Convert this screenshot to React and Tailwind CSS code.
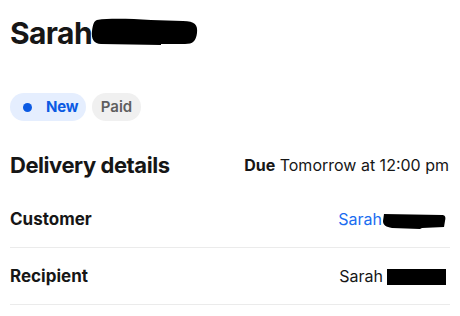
import React from "react";

export default function App() {
  return (
    <div className="w-[460px] h-[316px] bg-white overflow-hidden px-[10px] text-[#161616]" style={{ fontFamily: "Inter, 'Noto Sans', sans-serif" }}>
      <div className="pt-[15px] flex items-center">
        <h1 className="text-[30px] leading-[36px] font-bold tracking-[-0.6px]">Sarah</h1>
        <svg width="108" height="30" viewBox="0 0 108 30" className="ml-[-1px] mt-[-2px]">
          <path d="M6 3 C20 1 40 2 60 3 L92 4 C104 4 107 8 106 16 C105 24 102 27 94 27 L70 27 L70 28 L10 27 C3 27 0 22 1 14 C2 7 3 4 6 3 Z" fill="#000" />
        </svg>
      </div>

      <div className="mt-[42px] flex items-center gap-[6px]">
        <span className="h-[28px] w-[76px] rounded-full bg-[#e5eefe] flex items-center pl-[13px]">
          <span className="w-[9px] h-[9px] rounded-full bg-[#0b5ae3]" />
          <span className="ml-[14px] text-[15px] font-bold text-[#0b5ae3] tracking-[-0.2px]">New</span>
        </span>
        <span className="h-[28px] w-[49px] rounded-full bg-[#f0f0f0] flex items-center justify-center text-[15px] font-semibold text-[#5e5e5e]">Paid</span>
      </div>

      <div className="mt-[30px] flex items-center justify-between">
        <h2 className="text-[22px] leading-[28px] font-bold tracking-[-0.45px]">Delivery details</h2>
        <div className="text-[16px] leading-[24px] pr-[1px]">
          <span className="font-bold">Due</span> Tomorrow at 12:00 pm
        </div>
      </div>

      <div className="mt-[12px]">
        <div className="flex items-center justify-between py-4 border-b border-[#ebebeb]">
          <span className="text-[17px] leading-[24px] font-bold">Customer</span>
          <span className="flex items-center pr-[4px]">
            <span className="text-[16px] leading-[24px] text-[#1a6cf0]">Sarah</span>
            <svg width="64" height="17" viewBox="0 0 64 17" className="mt-[4px]">
              <path d="M2 1 L60 2 C63 2 64 4 63 8 L62 14 L40 15 L38 16 L10 15 C4 14 1 12 1 8 Z" fill="#000" />
            </svg>
          </span>
        </div>
        <div className="flex items-center justify-between py-4 border-b border-[#ebebeb]">
          <span className="text-[17px] leading-[24px] font-bold">Recipient</span>
          <span className="flex items-center pr-[4px]">
            <span className="text-[16px] leading-[24px]">Sarah</span>
            <span className="ml-[4px] w-[59px] h-[16px] bg-black mt-[1px]" />
          </span>
        </div>
      </div>
    </div>
  );
}
